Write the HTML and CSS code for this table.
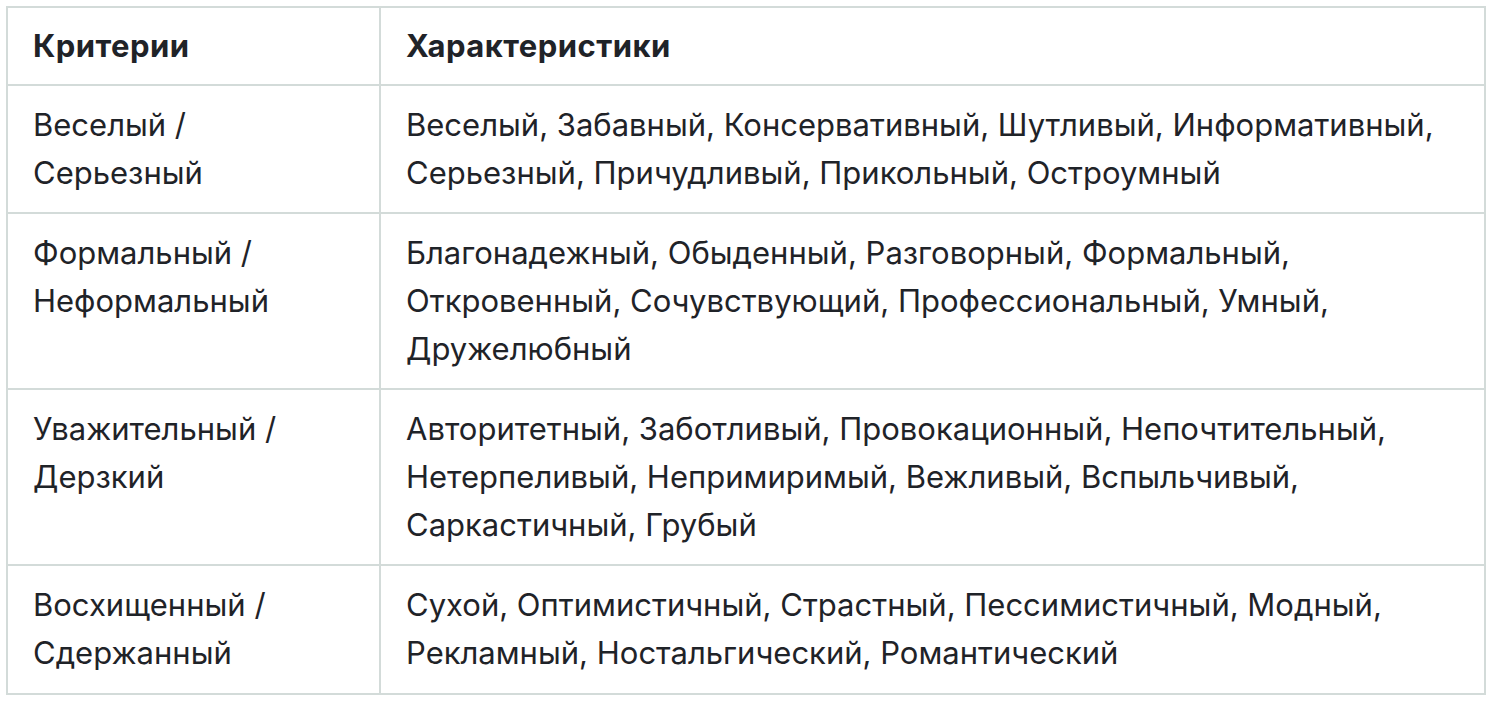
FILE: index.html
```html
<!DOCTYPE html>
<html lang="ru">
<head>
<meta charset="utf-8">
<link rel="stylesheet" href="styles.css">
</head>
<body>
<table class="tone-table">
  <colgroup>
    <col class="col-criteria">
    <col class="col-traits">
  </colgroup>
  <thead>
    <tr>
      <th>Критерии</th>
      <th>Характеристики</th>
    </tr>
  </thead>
  <tbody>
    <tr>
      <td>Веселый / Серьезный</td>
      <td>Веселый, Забавный, Консервативный, Шутливый, Информативный, Серьезный, Причудливый, Прикольный, Остроумный</td>
    </tr>
    <tr>
      <td>Формальный / Неформальный</td>
      <td>Благонадежный, Обыденный, Разговорный, Формальный, Откровенный, Сочувствующий, Профессиональный, Умный, Дружелюбный</td>
    </tr>
    <tr>
      <td>Уважительный / Дерзкий</td>
      <td>Авторитетный, Заботливый, Провокационный, Непочтительный, Нетерпеливый, Непримиримый, Вежливый, Вспыльчивый, Саркастичный, Грубый</td>
    </tr>
    <tr class="last-row">
      <td>Восхищенный / Сдержанный</td>
      <td>Сухой, Оптимистичный, Страстный, Пессимистичный, Модный, Рекламный, Ностальгический, Романтический</td>
    </tr>
  </tbody>
</table>
</body>
</html>
```
FILE: styles.css
```css
body {
  margin: 6px;
  background: #ffffff;
  color: #1f2328;
  font-family: Inter, "Liberation Sans", sans-serif;
  font-size: 31px;
  line-height: 48px;
}

.tone-table {
  border-collapse: separate;
  border-spacing: 0;
  table-layout: fixed;
  width: 1480px;
  border-top: 2px solid #d3dbd9;
  border-left: 2px solid #d3dbd9;
}

.col-criteria {
  width: 373px;
}

.col-traits {
  width: 1105px;
}

.tone-table th,
.tone-table td {
  text-align: left;
  vertical-align: top;
  border-right: 2px solid #d3dbd9;
  border-bottom: 2px solid #d3dbd9;
  padding: 15px 24px 15px 25px;
}

.tone-table th {
  font-weight: 700;
  letter-spacing: 0.45px;
  padding-top: 14px;
  padding-bottom: 14px;
}

.tone-table .last-row td {
  padding-bottom: 16px;
}
```
